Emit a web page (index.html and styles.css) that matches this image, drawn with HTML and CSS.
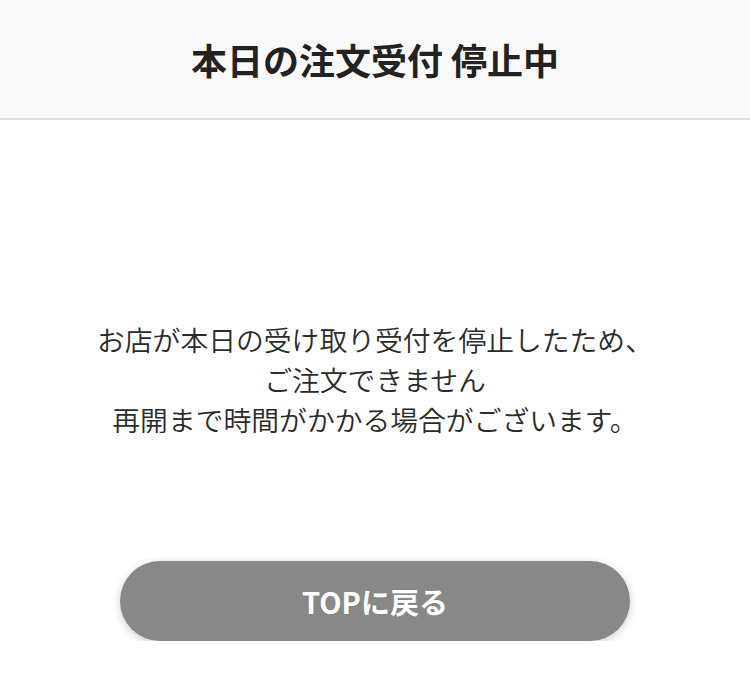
FILE: index.html
```html
<!DOCTYPE html>
<html lang="ja">
<head>
  <meta charset="UTF-8">
  <meta name="viewport" content="width=device-width, initial-scale=1">
  <title>本日の注文受付 停止中</title>
  <link rel="stylesheet" href="styles.css">
</head>
<body>
  <header class="page-header">
    <h1>本日の注文受付 停止中</h1>
  </header>

  <main class="closed">
    <p class="closed-message">
      お店が本日の受け取り受付を停止したため、<br>
      ご注文できません<br>
      再開まで時間がかかる場合がございます。
    </p>
    <a class="back-button" href="#">TOPに戻る</a>
  </main>
</body>
</html>
```

FILE: styles.css
```css
body {
  margin: 0;
  font-family: "Noto Sans CJK JP", "Noto Sans", sans-serif;
  color: #333;
  background: #fff;
}

.page-header {
  height: 118px;
  display: flex;
  align-items: center;
  justify-content: center;
  background: #f9f9f9;
  border-bottom: 2px solid #e0e0e0;
}

.page-header h1 {
  margin: 0;
  font-size: 36px;
  font-weight: bold;
  color: #222;
}

.closed {
  display: flex;
  flex-direction: column;
  align-items: center;
  padding-top: 199px;
}

.closed-message {
  margin: 0;
  font-size: 27.8px;
  line-height: 40px;
  text-align: center;
  font-weight: 350;
  color: #2b2b2b;
}

.back-button {
  margin-top: 122px;
  width: 510px;
  height: 80px;
  display: flex;
  align-items: center;
  justify-content: center;
  border-radius: 40px;
  background: #888;
  color: #fff;
  font-size: 29px;
  font-weight: bold;
  text-decoration: none;
  box-shadow: 0 2px 8px rgba(0, 0, 0, 0.2);
}
```
